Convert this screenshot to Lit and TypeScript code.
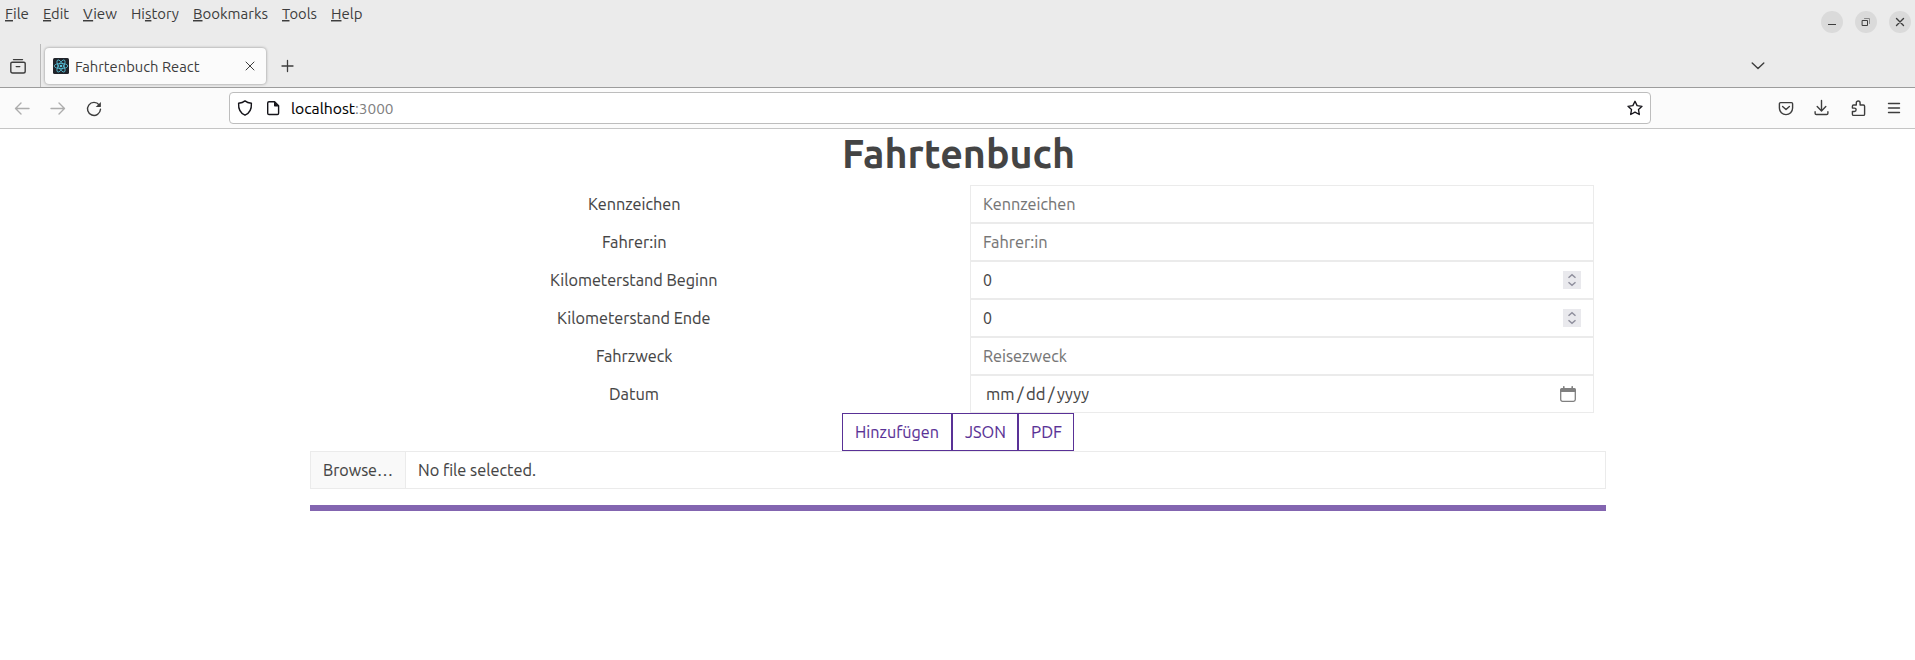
import { LitElement, html, svg, css, TemplateResult } from "lit";
import { customElement } from "lit/decorators.js";

// One line of text whose advance is fixed, so that labels keep their metrics in any sans-serif.
const label = (text: string | TemplateResult, width: number, cls = "body") => html`
  <svg class="label ${cls}" width=${width} height="20">
    <text x="0" y="16" textLength=${width} lengthAdjust="spacingAndGlyphs">${text}</text>
  </svg>`;

const icon = (shape: TemplateResult, cls = "") => html`
  <svg class="icon ${cls}" width="16" height="16" viewBox="0 0 16 16">${shape}</svg>`;

const icons = {
  tabs: svg`<path d="M3.5 1.6h9M2.2 4.2h11.6q1.4 0 1.4 1.4v7.6q0 1.8-1.8 1.8H2.6Q.8 15 .8 13.200V5.600q0-1.400 1.400-1.400zM6.200 8.600h3.600"/>`,
  close: svg`<path stroke-width="1" d="m4 4 8 8M12 4l-8 8"/>`,
  plus: svg`<path stroke-width="1.300" d="M7.500 2.500v11M2 8h11"/>`,
  chevron: svg`<path d="m2.200 5 5.800 5.600L13.800 5"/>`,
  back: svg`<path d="M15 8.500H1.500M7 3 1.500 8.500 7 14"/>`,
  forward: svg`<path d="M1 8.500h13.500M9 3l5.500 5.500L9 14"/>`,
  reload: svg`<path d="M13.200 5A6.500 6.500 0 1 0 14.500 9.300"/><path fill="currentColor" stroke="none" d="M14.900 1.900v4.700q0 .4-.4.400H9.700z"/>`,
  shield: svg`<path stroke-width="1.400" d="M8 .9C6.500 2.100 4 3 1.600 3.300c-.3 5.200.9 9.600 6.400 11.900 5.500-2.300 6.700-6.700 6.400-11.900C12 3 9.500 2.100 8 .9z"/>`,
  page: svg`<path stroke-width="1.400" d="M9.600 1.700H4Q2.700 1.700 2.700 3v10.200q0 1.300 1.300 1.300h8.300q1.300 0 1.300-1.300V5.700z"/><path fill="currentColor" stroke="none" d="M9 1.500 14 6.500H9.800Q9 6.500 9 5.700z"/>`,
  star: svg`<path stroke-width="1.350" d="m8 1.300 2.100 4.300 4.900.7-3.500 3.300.8 4.900L8 12.200l-4.300 2.300.8-4.900L1 6.300l4.900-.7z"/>`,
  pocket: svg`<path d="M2.600 2.600h10.800q1.200 0 1.200 1.200V8a6.600 6.600 0 0 1-13.200 0V3.800q0-1.200 1.200-1.200zM4.600 6.500 8 9.600l3.400-3.100"/>`,
  download: svg`<path d="M7.500.5v10.300M3.200 6.600l4.300 4.300 4.300-4.300M1.100 11.700v1.500q0 1.300 1.300 1.300h10.200q1.300 0 1.300-1.300v-1.500"/>`,
  puzzle: svg`<path d="M6.300 5V2.900a1.900 1.900 0 0 1 3.800 0V5h3.300q1.200 0 1.200 1.200v8q0 1.200-1.200 1.200H3.600q-1.200 0-1.200-1.200v-2.700h2a1.700 1.700 0 0 0 0-3.400h-2V6.200Q2.400 5 3.600 5z"/>`,
  menu: svg`<path stroke-width="1.400" d="M2.500 3.500h11M2.500 8h11M2.500 12.500h11"/>`,
};

@customElement("browser-header")
class BrowserHeader extends LitElement {
  static styles = css`
    :host { display: block; color: #3d3d3d; font-family: Ubuntu, "Noto Sans", "Open Sans", sans-serif; }
    .label, .icon { display: block; overflow: visible; flex: none; fill: currentColor; }
    .icon { fill: none; stroke: currentColor; stroke-width: 1.4; stroke-linejoin: round; stroke-linecap: round; }
    .small { font-size: 14.7px; }
    .url { font-size: 15.5px; }
    .key { text-decoration: underline; text-underline-offset: 2px; text-decoration-thickness: 1px; }
    .top { display: flex; justify-content: space-between; height: 87px; background: #ebebeb; border-bottom: 1px solid #9c9c9c; }
    .left { flex: 1; display: flex; flex-direction: column; }
    .menus { display: flex; gap: 14px; padding: 3px 0 0 4.5px; height: 41px; box-sizing: content-box; }
    .tabs { display: flex; align-items: center; height: 43px; }
    .overview { width: 40px; height: 43px; padding: 0 0 0 10px; box-sizing: border-box; display: flex; align-items: center; }
    .rule { width: 1px; height: 43px; background: #b9b9b9; }
    .tab { box-sizing: border-box; margin-left: 4px; width: 221px; height: 36px; padding: 0 8px; display: flex; align-items: center;
      background: #fbfbfb; border-radius: 4px; box-shadow: 0 0 3px rgba(0,0,0,.42); }
    .fav { margin-right: 6px; display: block; }
    .push { margin-left: auto; }
    .new { margin-left: 14px; }
    .list { margin-left: auto; margin-right: 55px; }
    .window { display: flex; gap: 12px; padding: 11px 4px 0 0; }
    .round { width: 22px; height: 22px; border-radius: 50%; background: #dadada; display: grid; place-items: center; }
    .bar { display: flex; align-items: center; height: 40px; background: #fbfbfb; border-bottom: 1px solid #c5c5c5; }
    .nav { display: flex; gap: 20px; padding-left: 14px; width: 215px; }
    .dim { color: #adadad; }
    .address { box-sizing: border-box; width: 1422px; height: 32px; border: 1px solid #bdbdbd; border-radius: 4px; background: #fff;
      display: flex; align-items: center; padding: 0 7px; color: #15141a; }
    .page { margin: 0 10px 0 12px; }
    .host { fill: #000; stroke: #000; stroke-width: .1; }
    .port { fill: #808080; }
    .tools { display: flex; gap: 20px; margin-left: 127px; }
  `;

  private menus: [string, string, string, number][] = [
    ["", "F", "ile", 24], ["", "E", "dit", 26], ["", "V", "iew", 34], ["Hi", "s", "tory", 48],
    ["", "B", "ookmarks", 75], ["", "T", "ools", 35], ["", "H", "elp", 31.5],
  ];

  render() {
    return html`
      <div class="top">
        <div class="left">
          <div class="menus">
            ${this.menus.map(([a, k, b, w]) => label(svg`${a}<tspan class="key">${k}</tspan>${b}`, w, "small"))}
          </div>
          <div class="tabs">
            <div class="overview">${icon(icons.tabs)}</div>
            <div class="rule"></div>
            <div class="tab">
              <svg class="fav" width="16" height="16" viewBox="0 0 16 16">
                <rect width="16" height="16" rx="1.500" fill="#20232a"/>
                <g fill="none" stroke="#58c4dc" stroke-width=".8">
                  <ellipse cx="8" cy="8" rx="6.800" ry="2.600"/>
                  <ellipse cx="8" cy="8" rx="6.800" ry="2.600" transform="rotate(60 8 8)"/>
                  <ellipse cx="8" cy="8" rx="6.800" ry="2.600" transform="rotate(120 8 8)"/>
                </g>
                <circle cx="8" cy="8" r="1.300" fill="#58c4dc"/>
              </svg>
              ${label("Fahrtenbuch React", 124.5, "small")}
              <div class="push">${icon(icons.close)}</div>
            </div>
            <div class="new">${icon(icons.plus)}</div>
            <div class="list">${icon(icons.chevron)}</div>
          </div>
        </div>
        <div class="window">
          <div class="round"><svg class="icon" width="10" height="10"><path stroke-linecap="butt" stroke-width="1" d="M1 7.500h8"/></svg></div>
          <div class="round"><svg class="icon" width="10" height="10"><path stroke-linejoin="miter" stroke-width="1" d="M1.500 3.500h5v5h-5z"/><path stroke="#888" stroke-width="1" d="M3.500 1.500h5v5"/></svg></div>
          <div class="round"><svg class="icon" width="10" height="10"><path d="m1.500 1.500 7 7m0-7-7 7"/></svg></div>
        </div>
      </div>
      <div class="bar">
        <div class="nav">${icon(icons.back, "dim")}${icon(icons.forward, "dim")}${icon(icons.reload)}</div>
        <div class="address">
          ${icon(icons.shield)}
          <div class="page">${icon(icons.page)}</div>
          ${label("localhost", 64, "url host")}${label(":3000", 38.5, "url port")}
          <div class="push">${icon(icons.star)}</div>
        </div>
        <div class="tools">${icon(icons.pocket)}${icon(icons.download)}${icon(icons.puzzle)}${icon(icons.menu)}</div>
      </div>`;
  }
}

@customElement("trip-log")
class TripLog extends LitElement {
  static styles = css`
    :host { display: block; box-sizing: border-box; padding-left: 310px; width: 1606px; color: #444; font-family: Ubuntu, "Noto Sans", "Open Sans", sans-serif; }
    .label { display: block; overflow: visible; flex: none; fill: currentColor; }
    .body { font-size: 16.6px; stroke: currentColor; stroke-width: .1; }
    .hint { font-size: 16.6px; fill: #757575; stroke: #757575; stroke-width: .1; }
    .title { height: 56px; display: flex; justify-content: center; margin: 0; }
    .heading { display: block; overflow: visible; font-size: 40.5px; font-weight: 600; fill: #444; }
    .row { display: grid; grid-template-columns: 1fr 1fr; height: 38px; }
    .name { display: flex; justify-content: center; align-items: center; }
    .cell { padding: 0 12px; }
    .field { box-sizing: border-box; height: 38px; border: 1px solid #ebebeb; background: #fff; display: flex; align-items: center; justify-content: space-between; padding: 0 12px; }
    .date { display: flex; gap: 2.5px; padding-left: 2.5px; }
    .calendar { margin-right: 5px; }
    .actions { display: flex; justify-content: center; }
    .action { box-sizing: border-box; height: 38px; border: 1px solid #593196; background: #fff; color: #593196; display: flex; align-items: center; justify-content: center; padding: 0; font: inherit; }
    .w110 { width: 110px; }
    .w66 { width: 66px; }
    .w56 { width: 56px; }
    .file { box-sizing: border-box; height: 38px; border: 1px solid #ebebeb; display: flex; align-items: center; background: #fff; }
    .browse { box-sizing: border-box; width: 95px; height: 36px; background: #f9f9f9; border-right: 1px solid #ebebeb; display: flex; align-items: center; padding-left: 12px; margin-right: 12px; }
    .line { height: 6px; background: #8365b0; margin-top: 16px; }
  `;

  private spinner = html`<svg width="18" height="18"><rect width="18" height="18" fill="#e9e9ed"/>
    <path fill="none" stroke="#8f8f9d" stroke-width="1.500" d="m5.500 6.800 3.500-3 3.500 3M5.500 11.200l3.500 3 3.500-3"/></svg>`;

  private calendar = html`<svg class="calendar" width="16" height="16" viewBox="0 0 16 16">
    <rect x=".7" y="2.700" width="14.600" height="12.600" rx="1.800" fill="none" stroke="#808080" stroke-width="1.300"/>
    <path fill="#808080" d="M0 6V4Q0 2 2 2h1V.6q0-.6.800-.6t.8.600V2h6.800V.6q0-.6.800-.6t.8.600V2h1q2 0 2 2v2z"/></svg>`;

  private row(name: string, width: number, content: TemplateResult, tail: TemplateResult | string = "") {
    return html`<div class="row">
      <div class="name">${label(name, width)}</div>
      <div class="cell"><div class="field">${content}${tail}</div></div>
    </div>`;
  }

  render() {
    return html`
      <h1 class="title"><svg class="heading" width="233" height="50"><text x="0" y="39" textLength="233" lengthAdjust="spacingAndGlyphs">Fahrtenbuch</text></svg></h1>
      ${this.row("Kennzeichen", 92.5, label("Kennzeichen", 92.5, "hint"))}
      ${this.row("Fahrer:in", 64.5, label("Fahrer:in", 64.5, "hint"))}
      ${this.row("Kilometerstand Beginn", 167.5, label("0", 9), this.spinner)}
      ${this.row("Kilometerstand Ende", 153.5, label("0", 9), this.spinner)}
      ${this.row("Fahrzweck", 76.5, label("Reisezweck", 84, "hint"))}
      ${this.row("Datum", 50, html`<div class="date">${label("mm", 28.5)}${label("/", 6.500)}${label("dd", 19.5)}${label("/", 6.500)}${label("yyyy", 32)}</div>`, this.calendar)}
      <div class="actions">
        <button class="action w110">${label("Hinzufügen", 84)}</button>
        <button class="action w66">${label("JSON", 41)}</button>
        <button class="action w56">${label("PDF", 31)}</button>
      </div>
      <div class="file"><div class="browse">${label("Browse…", 70)}</div>${label("No file selected.", 118)}</div>
      <div class="line"></div>`;
  }
}

@customElement("app-root")
class AppRoot extends LitElement {
  static styles = css`
    :host { display: block; height: 660px; background: #fff; overflow: hidden; }
  `;

  render() {
    return html`<browser-header></browser-header><trip-log></trip-log>`;
  }
}
